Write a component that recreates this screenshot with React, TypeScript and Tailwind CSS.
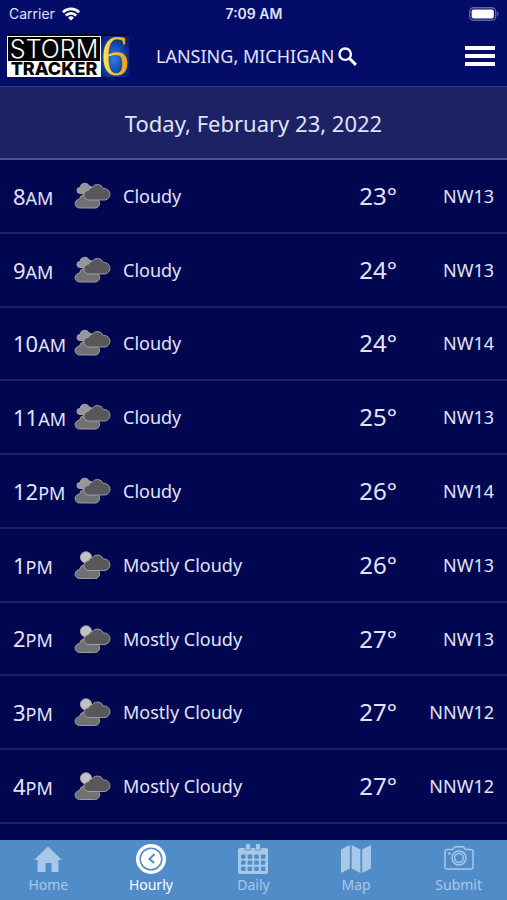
import type { ReactNode } from "react";

type Sky = "Cloudy" | "Mostly Cloudy";

type Hour = {
  hour: number;
  period: "AM" | "PM";
  sky: Sky;
  temp: number;
  wind: string;
};

const HOURS: Hour[] = [
  { hour: 8, period: "AM", sky: "Cloudy", temp: 23, wind: "NW13" },
  { hour: 9, period: "AM", sky: "Cloudy", temp: 24, wind: "NW13" },
  { hour: 10, period: "AM", sky: "Cloudy", temp: 24, wind: "NW14" },
  { hour: 11, period: "AM", sky: "Cloudy", temp: 25, wind: "NW13" },
  { hour: 12, period: "PM", sky: "Cloudy", temp: 26, wind: "NW14" },
  { hour: 1, period: "PM", sky: "Mostly Cloudy", temp: 26, wind: "NW13" },
  { hour: 2, period: "PM", sky: "Mostly Cloudy", temp: 27, wind: "NW13" },
  { hour: 3, period: "PM", sky: "Mostly Cloudy", temp: 27, wind: "NNW12" },
  { hour: 4, period: "PM", sky: "Mostly Cloudy", temp: 27, wind: "NNW12" },
];

function StatusBar() {
  return (
    <div className="grid h-7 grid-cols-3 items-center pr-2 pl-[9px] font-['Inter',sans-serif] text-sm text-[#dfe3fb]">
      <div className="flex items-center gap-[7px]">
        <span>Carrier</span>
        <svg viewBox="0 0 18 14" className="h-[14px] w-[18px]" fill="none" stroke="#fff" strokeWidth="2.6" aria-hidden="true">
          <path d="M.9 5.200a11.600 11.600 0 0 1 16.200 0" />
          <path d="M3.800 8.500a7.400 7.400 0 0 1 10.400 0" />
          <path d="M9 13.600 6 10.700a4.300 4.300 0 0 1 6 0Z" fill="#fff" stroke="none" />
        </svg>
      </div>
      <span className="text-center font-semibold">7:09 AM</span>
      <svg viewBox="0 0 30 14" className="h-[14px] w-[30px] justify-self-end" aria-hidden="true">
        <rect x=".7" y=".7" width="26" height="12.600" rx="4" fill="none" stroke="#6267a4" strokeWidth="1.400" />
        <rect x="2.600" y="2.600" width="22.200" height="8.800" rx="2" fill="#fff" />
        <path d="M28.200 4.800c1.800.6 1.800 3.800 0 4.400Z" fill="#6267a4" />
      </svg>
    </div>
  );
}

function Logo() {
  return (
    <svg viewBox="0 0 122 45" className="h-[45px] w-[122px] overflow-visible" role="img" aria-label="Storm Tracker 6">
      <defs>
        <radialGradient id="globe" cx="45%" cy="55%" r="62%">
          <stop offset="0" stopColor="#2f7fe0" />
          <stop offset=".5" stopColor="#1450b4" />
          <stop offset="1" stopColor="#06207a" />
        </radialGradient>
        <linearGradient id="gold" x1="0" y1="0" x2="1" y2="0">
          <stop offset="0" stopColor="#ffe867" />
          <stop offset=".5" stopColor="#fbc02a" />
          <stop offset="1" stopColor="#f29a12" />
        </linearGradient>
      </defs>
      <rect width="122" height="43" fill="#03062e" />
      <rect x="94" y="2" width="28" height="41" fill="url(#globe)" />
      <rect y="2" width="94" height="41" fill="#fff" />
      <rect x="1" y="3" width="92" height="24" fill="#000" />
      <text x="47" y="24" textAnchor="middle" fontFamily="Inter, sans-serif" fontSize="25" fontWeight="300" fill="#fff">
        STORM
      </text>
      <text x="47" y="41" textAnchor="middle" fontFamily="Inter, sans-serif" fontSize="18" fontWeight="800" fill="#000">
        TRACKER
      </text>
      <text x="108" y="41" textAnchor="middle" fontFamily="Liberation Serif, serif" fontSize="56" fill="url(#gold)">
        6
      </text>
    </svg>
  );
}

function Header() {
  return (
    <header className="flex h-[58px] items-center justify-between pr-3 pb-0.5 pl-[7px]">
      <div className="flex items-center gap-[27px]">
        <Logo />
        <button type="button" className="flex items-center gap-1 text-lg whitespace-nowrap text-[#e0e4fb]">
          LANSING, MICHIGAN
          <svg viewBox="0 0 19 19" className="size-[19px]" fill="none" stroke="#fff" strokeWidth="2.400" aria-hidden="true">
            <circle cx="7.200" cy="7.200" r="5.700" />
            <path d="m11.300 11.300 6.600 6.600" strokeWidth="2.900" />
          </svg>
        </button>
      </div>
      <button type="button" aria-label="Menu" className="flex w-[30px] flex-col gap-1">
        <span className="h-1 bg-white" />
        <span className="h-1 bg-white" />
        <span className="h-1 bg-white" />
      </button>
    </header>
  );
}

function SkyIcon({ sky }: { sky: Sky }) {
  const cloudy = sky === "Cloudy";
  return (
    <svg viewBox="0 0 37 28" className="h-7 w-[37px]" stroke="#a5a6ac" strokeWidth=".9" aria-hidden="true">
      {cloudy ? (
        <path
          d="M6 11.500A3 3 0 0 1 6 5.400 4.900 4.900 0 0 1 15.300 4 4 4 0 0 1 17 11.500Z"
          fill="#97979a"
        />
      ) : (
        <circle cx="12" cy="6.300" r="5.600" fill="#c2c3c4" />
      )}
      <g transform={cloudy ? undefined : "translate(0 1.500)"}>
        <path
          d="M5.500 26A4.300 4.300 0 0 1 5.500 17.200 5.500 5.500 0 0 1 15.500 14.800L22 16.500A4.900 4.900 0 0 1 19.500 26Z"
          fill="#717173"
        />
        <path
          d="M15 18A4.900 4.900 0 0 1 14.600 8.200 4.200 4.200 0 0 1 18.300 5.100 6.300 6.300 0 0 1 29.300 6.500 5.800 5.800 0 1 1 31 18Z"
          fill="#58585a"
        />
      </g>
    </svg>
  );
}

function HourRow({ hour, period, sky, temp, wind }: Hour) {
  return (
    <li className="flex items-center border-b-2 border-[#1b2163] px-[13px] text-lg">
      <span className="w-[61px] text-[22px] whitespace-nowrap">
        {hour}
        <span className="text-lg">{period}</span>
      </span>
      <SkyIcon sky={sky} />
      <span className="flex-1 pl-3">{sky}</span>
      <span className="text-right text-2xl">{temp}°</span>
      <span className="w-[97px] text-right">{wind}</span>
    </li>
  );
}

function HomeIcon() {
  return (
    <svg viewBox="0 0 30 30" className="size-[30px]" fill="currentColor" aria-hidden="true">
      <path d="M15 2.500 29 16h-3.500v12H18.500v-9h-6v9h-8V16H1Z" />
    </svg>
  );
}

function ClockIcon() {
  return (
    <svg viewBox="0 0 30 30" className="size-[30px]" aria-hidden="true">
      <circle cx="15" cy="15" r="15" fill="currentColor" />
      <circle cx="15" cy="15" r="10.800" fill="none" stroke="#508cc8" strokeWidth="1.500" />
      <path d="m18.500 10-5 5 4.500 4" fill="none" stroke="#508cc8" strokeWidth="2" />
    </svg>
  );
}

function CalendarIcon() {
  const cols = [3, 9.600, 16.200, 22.800];
  const rows = [10.500, 16.600, 22.700];
  return (
    <svg viewBox="0 0 30 30" className="size-[30px]" fill="currentColor" aria-hidden="true">
      <rect y="4" width="30" height="26" rx="2" />
      <rect x="8" y="0" width="4" height="6" rx="1" />
      <rect x="18" y="0" width="4" height="6" rx="1" />
      <path d="M7.300 3.500V6h5.400V3.500M17.300 3.500V6h5.400V3.500" fill="none" stroke="#508cc8" strokeWidth=".8" />
      {rows.map((y) =>
        cols.map((x) => <rect key={`${x}-${y}`} x={x} y={y} width="4.600" height="4.200" rx=".8" fill="#508cc8" />),
      )}
    </svg>
  );
}

function MapIcon() {
  return (
    <svg viewBox="0 0 30 30" className="size-[30px]" fill="currentColor" aria-hidden="true">
      <path d="M0 5.500 8.800 1v23.500L0 29Z" />
      <path d="m10.600 1 8.800 4.500V29l-8.800-4.500Z" />
      <path d="M21.200 5.500 30 1v23.500L21.200 29Z" />
    </svg>
  );
}

function CameraIcon() {
  return (
    <svg viewBox="0 0 30 30" className="size-[30px]" fill="none" stroke="currentColor" strokeWidth="1.500" aria-hidden="true">
      <path d="M3 5.500h5.500l2.300-2.700h8.400l2.300 2.700H27a2 2 0 0 1 2 2v15.500a2 2 0 0 1-2 2H3a2 2 0 0 1-2-2V7.500a2 2 0 0 1 2-2Z" />
      <circle cx="15" cy="14" r="7" />
      <circle cx="15" cy="14" r="4.400" />
      <circle cx="5.500" cy="9.500" r="1.200" fill="currentColor" stroke="none" />
    </svg>
  );
}

const TABS: { label: string; icon: ReactNode; active?: boolean }[] = [
  { label: "Home", icon: <HomeIcon /> },
  { label: "Hourly", icon: <ClockIcon />, active: true },
  { label: "Daily", icon: <CalendarIcon /> },
  { label: "Map", icon: <MapIcon /> },
  { label: "Submit", icon: <CameraIcon /> },
];

function TabBar() {
  return (
    <nav className="h-[60px] shrink-0 overflow-hidden bg-[#508cc8]">
      <div className="-mx-[3px] grid grid-cols-5">
        {TABS.map((tab) => (
          <a
            key={tab.label}
            href={`#${tab.label.toLowerCase()}`}
            aria-current={tab.active ? "page" : undefined}
            className={
              tab.active
                ? "flex flex-col items-center pt-1 text-sm leading-[22px] text-white"
                : "flex flex-col items-center pt-1 text-sm leading-[22px] text-[#a9c8e8]"
            }
          >
            {tab.icon}
            {tab.label}
          </a>
        ))}
      </div>
    </nav>
  );
}

export default function App() {
  return (
    <div className="flex h-screen flex-col bg-[#010650] font-['Noto_Sans',sans-serif] text-[#e0e4fb]">
      <div className="bg-[#040c69]">
        <StatusBar />
        <Header />
      </div>
      <h1 className="flex h-[74px] shrink-0 items-center justify-center border-t border-b-2 border-t-[#333b86] border-b-[#4b5296] bg-[#1c2263] pt-0.5 text-[22px]">
        Today, February 23, 2022
      </h1>
      <ul className="grid min-h-0 flex-1 auto-rows-fr overflow-y-auto pb-4">
        {HOURS.map((entry) => (
          <HourRow key={`${entry.hour}${entry.period}`} {...entry} />
        ))}
      </ul>
      <TabBar />
    </div>
  );
}
